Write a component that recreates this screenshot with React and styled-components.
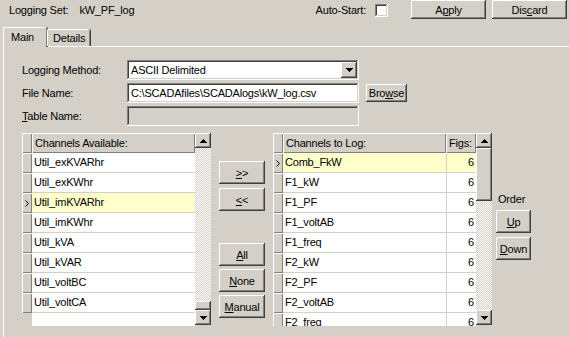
import React from "react";
import styled, { createGlobalStyle, css } from "styled-components";

const GlobalStyle = createGlobalStyle`
  html, body {
    margin: 0;
    padding: 0;
  }
  body {
    background: #d4d0c8;
    font-family: "Liberation Sans", Arial, sans-serif;
    font-size: 11px;
    letter-spacing: -0.2px;
    color: #000;
  }
`;

const raised = css`
  background: #d4d0c8;
  box-shadow: inset -1px -1px #404040, inset 1px 1px #ffffff,
    inset -2px -2px #808080, inset 2px 2px #d4d0c8;
`;

const sunken = css`
  box-shadow: inset -1px -1px #ffffff, inset 1px 1px #808080,
    inset -2px -2px #d4d0c8, inset 2px 2px #404040;
`;

const cellRaised = css`
  background: #d4d0c8;
  box-shadow: inset 1px 1px #ffffff, inset -1px -1px #808080;
`;

const checker = css`
  background: repeating-conic-gradient(#ffffff 0 25%, #d4d0c8 0 50%) 0 0 / 2px 2px;
`;

const Window = styled.div`
  width: 569px;
  height: 337px;
  display: flex;
  flex-direction: column;
  overflow: hidden;
`;

const TopBar = styled.div`
  display: flex;
  align-items: center;
  height: 20px;
  padding: 0 2px 0 9px;
`;

const Value = styled.span`
  margin-left: 11px;
`;

const Spacer = styled.div`
  flex: 1;
`;

const CheckBox = styled.div`
  width: 13px;
  height: 13px;
  margin-left: 9px;
  background: #fff;
  ${sunken};
`;

const Button = styled.button`
  ${raised};
  border: none;
  padding: 0;
  font-family: inherit;
  font-size: 11px;
  letter-spacing: inherit;
  color: #000;
  width: ${(p) => p.$w}px;
  height: ${(p) => p.$h}px;
  margin-left: ${(p) => p.$ml || 0}px;
  margin-top: ${(p) => p.$mt || 0}px;
  flex-shrink: 0;
  align-self: ${(p) => (p.$top ? "flex-start" : "auto")};
  display: flex;
  align-items: center;
  justify-content: center;
`;

const TabStrip = styled.div`
  display: flex;
  align-items: flex-end;
  margin: 6px 0 0 3px;
  height: 20px;
  position: relative;
  z-index: 1;
`;

const Tab = styled.div`
  width: ${(p) => p.$w}px;
  height: ${(p) => (p.$active ? 20 : 17)}px;
  box-sizing: border-box;
  background: #d4d0c8;
  border-top: 1px solid #fff;
  border-left: 1px solid #fff;
  border-top-left-radius: 2px;
  border-top-right-radius: 2px;
  box-shadow: inset -1px 0 #808080, 1px 0 #404040;
  margin-bottom: ${(p) => (p.$active ? -1 : 0)}px;
  padding: ${(p) => (p.$active ? "3px 0 0 7px" : "2px 0 0 5px")};
  line-height: 13px;
`;

const Panel = styled.div`
  flex: 1;
  margin-left: 3px;
  border-top: 1px solid #fff;
  border-left: 1px solid #fff;
  padding: 13px 0 0 18px;
`;

const FormRow = styled.div`
  display: flex;
  align-items: center;
  height: 20px;
  margin-bottom: 3px;
`;

const Label = styled.div`
  width: 105px;
`;

const Field = styled.div`
  width: 232px;
  height: 20px;
  box-sizing: border-box;
  ${sunken};
  background: ${(p) => (p.$disabled ? "#d4d0c8" : "#fff")};
  display: flex;
  align-items: center;
  padding: 0 2px 0 4px;
`;

const FieldText = styled.span`
  flex: 1;
  white-space: nowrap;
`;

const DropBtn = styled.div`
  ${raised};
  width: 16px;
  height: 16px;
  display: flex;
  align-items: center;
  justify-content: center;
`;

const GridsRow = styled.div`
  display: flex;
  align-items: flex-start;
  margin-top: 7px;
`;

const Grid = styled.div`
  display: flex;
  width: ${(p) => p.$w}px;
  height: 193px;
`;

const Table = styled.div`
  flex: 1;
  display: flex;
  flex-direction: column;
  overflow: hidden;
`;

const Row = styled.div`
  display: flex;
  height: 20px;
  flex-shrink: 0;
`;

const Indicator = styled.div`
  width: 10px;
  flex-shrink: 0;
  ${cellRaised};
  display: flex;
  align-items: center;
  justify-content: center;
`;

const HeadCell = styled.div`
  ${cellRaised};
  flex: ${(p) => (p.$w ? `0 0 ${p.$w}px` : 1)};
  box-sizing: border-box;
  padding-left: 3px;
  line-height: 20px;
  white-space: nowrap;
`;

const Cell = styled.div`
  flex: ${(p) => (p.$w ? `0 0 ${p.$w}px` : 1)};
  box-sizing: border-box;
  background: ${(p) => (p.$sel ? "#ffffcc" : "#ffffff")};
  border-bottom: 1px solid #d4d0c8;
  border-left: ${(p) => (p.$sep ? "1px solid #d4d0c8" : "none")};
  padding: ${(p) => (p.$right ? "0 2px 0 0" : "0 0 0 2px")};
  text-align: ${(p) => (p.$right ? "right" : "left")};
  line-height: 19px;
  white-space: nowrap;
`;

const Filler = styled.div`
  flex: 1;
  display: flex;
`;

const FillerGap = styled.div`
  width: 10px;
`;

const FillerWhite = styled.div`
  flex: 1;
  background: #fff;
`;

const ScrollBar = styled.div`
  width: 16px;
  flex-shrink: 0;
  display: flex;
  flex-direction: column;
  height: 192px;
`;

const ScrollBtn = styled.div`
  ${raised};
  height: ${(p) => p.$h}px;
  flex-shrink: 0;
  display: flex;
  align-items: center;
  justify-content: center;
`;

const Track = styled.div`
  flex: 1;
  ${checker};
`;

const MidCol = styled.div`
  display: flex;
  flex-direction: column;
  margin-left: 8px;
  padding-top: 28px;
  width: 46px;
`;

const RightGridWrap = styled.div`
  margin-left: 8px;
`;

const OrderCol = styled.div`
  display: flex;
  flex-direction: column;
  margin-left: 4px;
  padding-top: 59px;
  width: 35px;
`;

const OrderLabel = styled.div`
  line-height: 14px;
  padding-left: 2px;
`;

const Arrow = ({ dir }) => (
  <svg width="7" height="4" viewBox="0 0 7 4" shapeRendering="crispEdges">
    {dir === "up" ? (
      <polygon points="3.5,0 7,4 0,4" fill="#000" />
    ) : (
      <polygon points="0,0 7,0 3.5,4" fill="#000" />
    )}
  </svg>
);

const Pointer = () => (
  <svg width="4" height="7" viewBox="0 0 4 7">
    <polyline points="0.5,0.5 3.5,3.5 0.5,6.5" fill="none" stroke="#000" strokeWidth="1" />
  </svg>
);

const available = [
  "Util_exKVARhr",
  "Util_exKWhr",
  "Util_imKVARhr",
  "Util_imKWhr",
  "Util_kVA",
  "Util_kVAR",
  "Util_voltBC",
  "Util_voltCA",
];

const toLog = [
  "Comb_FkW",
  "F1_kW",
  "F1_PF",
  "F1_voltAB",
  "F1_freq",
  "F2_kW",
  "F2_PF",
  "F2_voltAB",
  "F2_freq",
];

const App = () => {
  return (
    <Window>
      <GlobalStyle />
      <TopBar>
        <span>Logging Set:</span>
        <Value>kW_PF_log</Value>
        <Spacer />
        <span>Auto-Start:</span>
        <CheckBox />
        <Button $w={75} $h={19} $ml={23} $top>
          A<u>p</u>ply
        </Button>
        <Button $w={75} $h={19} $ml={6} $top>
          Dis<u>c</u>ard
        </Button>
      </TopBar>

      <TabStrip>
        <Tab $w={44} $active>
          Main
        </Tab>
        <Tab $w={43}>Details</Tab>
      </TabStrip>

      <Panel>
        <FormRow>
          <Label>Logging Method:</Label>
          <Field>
            <FieldText>ASCII Delimited</FieldText>
            <DropBtn>
              <Arrow dir="down" />
            </DropBtn>
          </Field>
        </FormRow>
        <FormRow>
          <Label>File Name:</Label>
          <Field>
            <FieldText>C:\SCADAfiles\SCADAlogs\kW_log.csv</FieldText>
          </Field>
          <Button $w={41} $h={18} $ml={7}>
            Bro<u>w</u>se
          </Button>
        </FormRow>
        <FormRow>
          <Label>
            <u>T</u>able Name:
          </Label>
          <Field $disabled />
        </FormRow>

        <GridsRow>
          <Grid $w={189}>
            <Table>
              <Row>
                <Indicator />
                <HeadCell>Channels Available:</HeadCell>
              </Row>
              {available.map((name, i) => (
                <Row key={name}>
                  <Indicator>{i === 2 && <Pointer />}</Indicator>
                  <Cell $sel={i === 2}>{name}</Cell>
                </Row>
              ))}
              <Filler>
                <FillerGap />
                <FillerWhite />
              </Filler>
            </Table>
            <ScrollBar>
              <ScrollBtn $h={15}>
                <Arrow dir="up" />
              </ScrollBtn>
              <Track />
              <ScrollBtn $h={9} />
              <ScrollBtn $h={15}>
                <Arrow dir="down" />
              </ScrollBtn>
            </ScrollBar>
          </Grid>

          <MidCol>
            <Button $w={46} $h={23}>
              <u>&gt;</u>&gt;
            </Button>
            <Button $w={46} $h={23} $mt={4}>
              <u>&lt;</u>&lt;
            </Button>
            <Button $w={46} $h={23} $mt={32}>
              <u>A</u>ll
            </Button>
            <Button $w={46} $h={23} $mt={3}>
              <u>N</u>one
            </Button>
            <Button $w={46} $h={23} $mt={3}>
              <u>M</u>anual
            </Button>
          </MidCol>

          <RightGridWrap>
            <Grid $w={219}>
              <Table>
                <Row>
                  <Indicator />
                  <HeadCell>Channels to Log:</HeadCell>
                  <HeadCell $w={30}>Figs:</HeadCell>
                </Row>
                {toLog.map((name, i) => (
                  <Row key={name}>
                    <Indicator>{i === 0 && <Pointer />}</Indicator>
                    <Cell $sel={i === 0}>{name}</Cell>
                    <Cell $w={30} $sel={i === 0} $sep $right>
                      6
                    </Cell>
                  </Row>
                ))}
              </Table>
              <ScrollBar>
                <ScrollBtn $h={15}>
                  <Arrow dir="up" />
                </ScrollBtn>
                <ScrollBtn $h={53} />
                <Track />
                <ScrollBtn $h={15}>
                  <Arrow dir="down" />
                </ScrollBtn>
              </ScrollBar>
            </Grid>
          </RightGridWrap>

          <OrderCol>
            <OrderLabel>Order</OrderLabel>
            <Button $w={35} $h={23} $mt={4}>
              <u>U</u>p
            </Button>
            <Button $w={35} $h={23} $mt={4}>
              <u>D</u>own
            </Button>
          </OrderCol>
        </GridsRow>
      </Panel>
    </Window>
  );
};

export default App;
